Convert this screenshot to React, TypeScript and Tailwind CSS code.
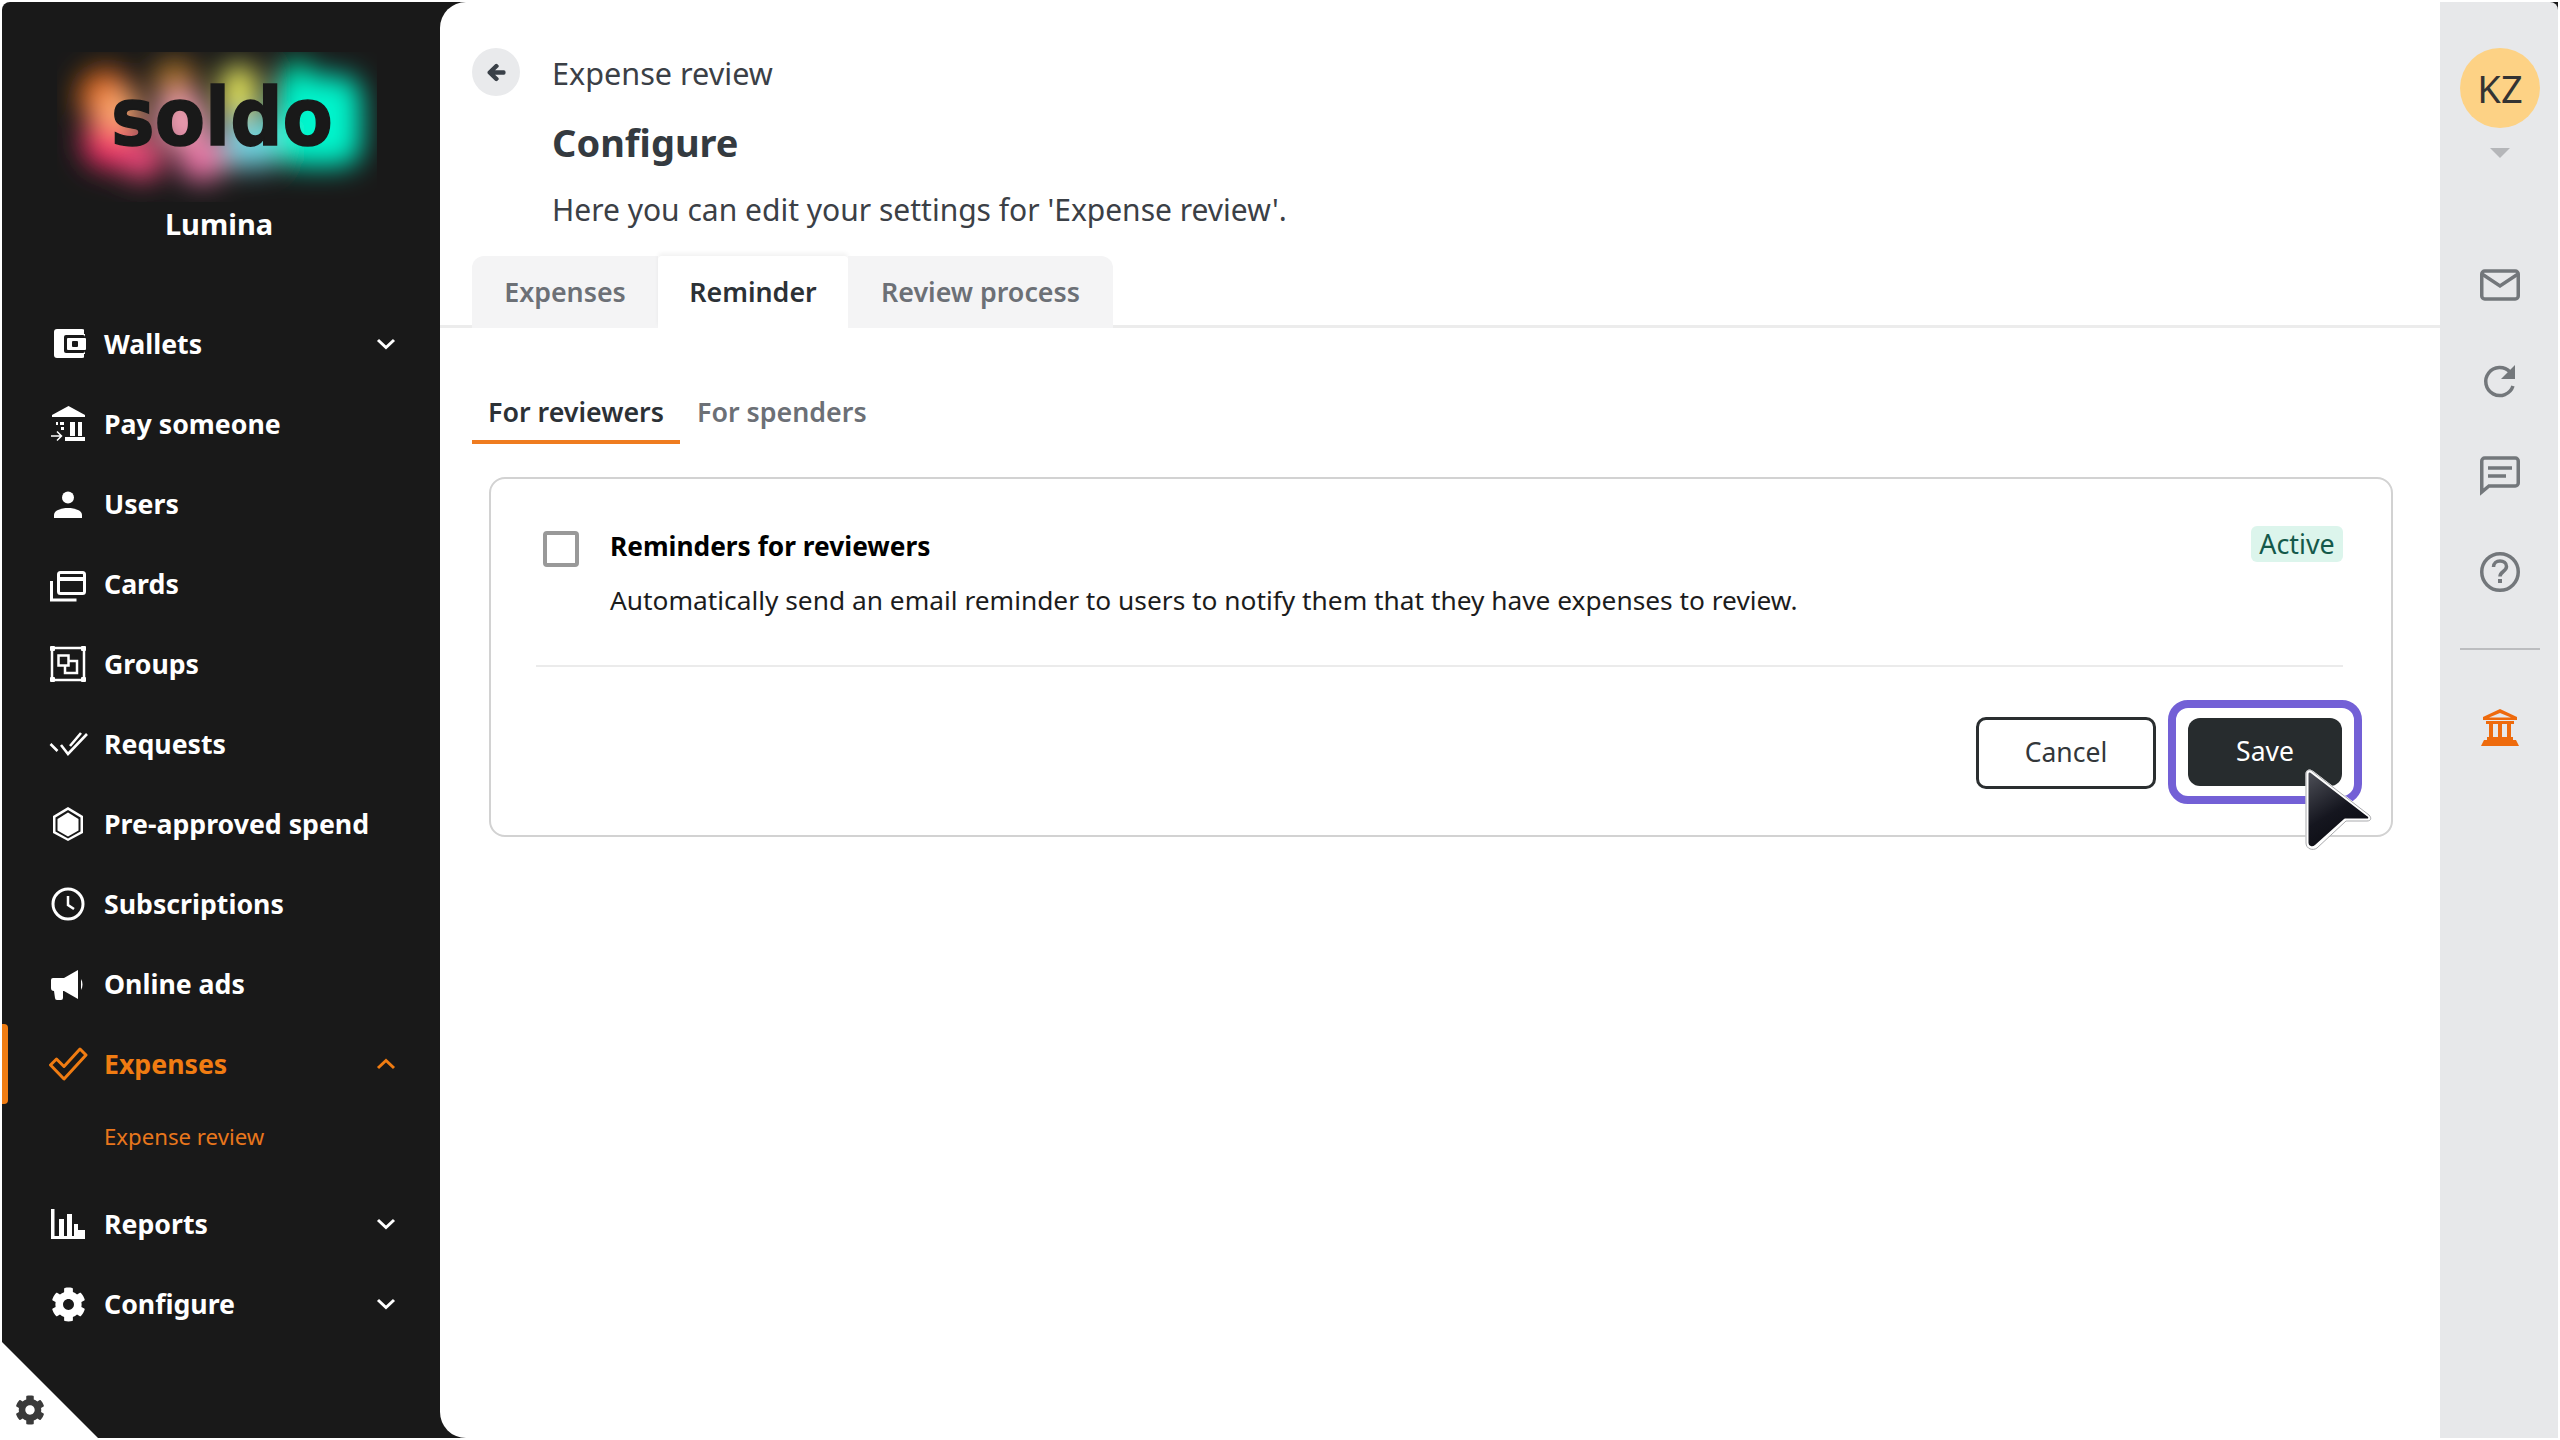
import React from "react";
import { FaCog, FaArrowLeft } from "react-icons/fa";

const I = ({ children }: { children: React.ReactNode }) => (
  <svg viewBox="0 0 40 40" className="w-[40px] h-[40px] shrink-0" fill="none">{children}</svg>
);
const D = "#191919";
const icons: Record<string, React.ReactNode> = {
  wallet: (
    <I>
      <rect x="6" y="5" width="31" height="29" rx="3" fill="#fff" />
      <rect x="16" y="11" width="21" height="18" rx="2" fill={D} />
      <rect x="19" y="14" width="19" height="12" rx="1" fill="#fff" />
      <rect x="24" y="17" width="6" height="6" rx="1" fill={D} />
      <rect x="36" y="5" width="2" height="5" fill={D} />
      <rect x="36" y="30" width="2" height="5" fill={D} />
    </I>
  ),
  bank: (
    <I>
      <polygon points="20.5,2 37,11 37,13 4,13 4,11" fill="#fff" />
      <rect x="22" y="18" width="5" height="14" fill="#fff" />
      <rect x="30" y="18" width="4" height="14" fill="#fff" />
      <rect x="17" y="33" width="20" height="4" fill="#fff" />
      <rect x="12" y="18" width="4" height="3" fill="#fff" />
      <rect x="8" y="18" width="2" height="3" fill="#fff" />
      <rect x="13" y="23" width="3" height="3" fill="#fff" />
      <path d="M3 32h10M9 27.5l4.5 4.5L9 36.5" stroke="#fff" strokeWidth="1.5" />
    </I>
  ),
  user: (
    <I>
      <circle cx="20" cy="13.5" r="6" fill="#fff" />
      <path d="M6 34v-3c0-5 8-7 14-7s14 2 14 7v3z" fill="#fff" />
    </I>
  ),
  cards: (
    <I>
      <rect x="10.5" y="8.5" width="26" height="21" rx="2" stroke="#fff" strokeWidth="3" />
      <rect x="10" y="13" width="27" height="4" fill="#fff" />
      <path d="M3.5 17v19h25" stroke="#fff" strokeWidth="3" />
    </I>
  ),
  groups: (
    <I>
      <rect x="4" y="4" width="32" height="32" stroke="#fff" strokeWidth="2.5" />
      <rect x="2" y="2" width="5" height="5" rx="1" fill="#fff" />
      <rect x="33" y="2" width="5" height="5" rx="1" fill="#fff" />
      <rect x="2" y="33" width="5" height="5" rx="1" fill="#fff" />
      <rect x="33" y="33" width="5" height="5" rx="1" fill="#fff" />
      <rect x="10.5" y="11.5" width="10" height="10" stroke="#fff" strokeWidth="2.5" />
      <path d="M21 17h8v12H17v-7" stroke="#fff" strokeWidth="2.5" />
    </I>
  ),
  requests: (
    <I>
      <path d="M2.5 20l7 7M13 21l7 9 19-20M22 22l11-13" stroke="#fff" strokeWidth="2.6" />
    </I>
  ),
  hex: (
    <I>
      <polygon points="20,3 35,12 35,29 20,37 5,29 5,12" fill="#fff" />
      <polygon points="20,6 32.5,13.5 32.5,27.5 20,34.5 7.5,27.5 7.5,13.5" fill={D} />
      <polygon points="20,8.5 30.5,15 30.5,26.5 20,32.5 9.5,26.5 9.5,15" fill="#fff" />
    </I>
  ),
  clock: (
    <I>
      <circle cx="20" cy="20" r="15" stroke="#fff" strokeWidth="3" />
      <path d="M20 12v9l6 4" stroke="#fff" strokeWidth="2.5" />
    </I>
  ),
  ads: (
    <I>
      <path d="M5 14h11l14-8v29l-14-8h-1v7a2 2 0 0 1-2 2H9a2 2 0 0 1-2-2l-1-7a3 3 0 0 1-3-3v-8a2 2 0 0 1 2-2z" fill="#fff" />
      <path d="M33 15c2 3 2 8 0 11z" fill="#fff" />
    </I>
  ),
  expenses: (
    <I>
      <polygon points="2.5,21 8.5,15 16,22.5 32,5 38,11 16,35" stroke="#f07c12" strokeWidth="3" strokeLinejoin="round" />
    </I>
  ),
  reports: (
    <I>
      <path d="M3 5h3.5v27h2V35H3zM11 15h5v17h-5zM19 10h5v22h-5zM26 20h4v12h-4zM30 26h7v9H8v-3h22z" fill="#fff" />
    </I>
  ),
  cog: (
    <div className="w-[40px] h-[40px] shrink-0 flex items-center justify-center text-white">
      <FaCog size={35} />
    </div>
  ),
};

const Chevron = ({ up, color }: { up?: boolean; color: string }) => (
  <svg viewBox="0 0 20 12" className="w-[20px] h-[12px]" fill="none">
    <path d={up ? "M2 10l8-7.5 8 7.5" : "M2 2l8 7.5 8-7.5"} stroke={color} strokeWidth="3" />
  </svg>
);

const Row = ({ icon, label, chev, active }: { icon: string; label: string; chev?: boolean; active?: boolean }) => (
  <div className="relative flex h-[80px] items-center pl-[46px] pr-[44px]">
    {active && <div className="absolute left-0 top-0 h-[80px] w-[6px] rounded-r-[4px] bg-[#f07c12]" />}
    {icons[icon]}
    <span className={`ml-[16px] flex-1 text-[26.7px] font-bold leading-none ${active ? "text-[#f07c12]" : "text-white"}`}>{label}</span>
    {chev && <Chevron up={active} color={active ? "#f07c12" : "#fff"} />}
  </div>
);

function Logo() {
  return (
    <svg viewBox="0 0 320 150" className="h-[150px] w-[320px]">
      <defs>
        <filter id="blur" x="-60%" y="-60%" width="220%" height="220%">
          <feGaussianBlur stdDeviation="14" />
        </filter>
      </defs>
      <g filter="url(#blur)">
        <circle cx="48" cy="44" r="27" fill="#e86c18" />
        <circle cx="52" cy="90" r="27" fill="#f8306a" />
        <circle cx="62" cy="60" r="22" fill="#ffae74" />
        <circle cx="118" cy="30" r="22" fill="#b87a2c" />
        <circle cx="85" cy="106" r="22" fill="#ee4a7c" />
        <circle cx="145" cy="106" r="24" fill="#ee74a8" />
        <circle cx="125" cy="68" r="26" fill="#fba6bc" />
        <rect x="164" y="14" width="36" height="52" rx="12" fill="#eef062" />
        <rect x="166" y="66" width="54" height="50" rx="14" fill="#72d4e2" />
        <rect x="224" y="8" width="30" height="50" rx="10" fill="#0ad092" />
        <rect x="218" y="24" width="86" height="90" rx="20" fill="#00f5cc" />
      </g>
      <text x="165" y="93" textAnchor="middle" textLength="222" lengthAdjust="spacingAndGlyphs" fill="#191919" stroke="#191919" strokeWidth="1.5" fontFamily="'DejaVu Sans', sans-serif" fontWeight="700" fontSize="80">soldo</text>
    </svg>
  );
}

const Mail = () => (
  <svg viewBox="0 0 40 40" className="w-[40px] h-[40px]" fill="none" stroke="#73777b" strokeWidth="3.5">
    <rect x="1.75" y="6" width="36.5" height="28" rx="3" />
    <path d="M2 9l18 12 18-12" />
  </svg>
);
const Refresh = () => (
  <svg viewBox="0 0 40 40" className="w-[40px] h-[40px]" fill="none">
    <path d="M33 25a14 14 0 1 1-3-14" stroke="#73777b" strokeWidth="3.5" />
    <polygon points="35,4 35,18 21,18" fill="#73777b" />
  </svg>
);
const Chat = () => (
  <svg viewBox="0 0 40 40" className="w-[40px] h-[40px]" fill="none" stroke="#73777b" strokeWidth="3.5">
    <path d="M1.75 36V5a3 3 0 0 1 3-3h30.5a3 3 0 0 1 3 3v22a3 3 0 0 1-3 3H9z" />
    <path d="M8 12h24M8 20h18" />
  </svg>
);
const Help = () => (
  <svg viewBox="0 0 40 40" className="w-[40px] h-[40px]" fill="none" stroke="#73777b" strokeWidth="3.5">
    <circle cx="20" cy="20" r="18.25" />
    <path d="M13.5 15c0-4 3-6 6.5-6s6.5 2 6.5 5.5c0 5-6.5 5-6.5 10" />
    <rect x="18" y="27" width="4" height="4" fill="#73777b" stroke="none" />
  </svg>
);
const BankO = () => (
  <svg viewBox="0 0 40 40" className="w-[40px] h-[40px]" fill="none">
    <path d="M20 2L37 10v3H3v-3z M20 6L9 10.5h22z" fill="#ee6a0c" fillRule="evenodd" />
    <path d="M6 14h28v3H6zM7 30h26v3H7zM9 17h4v13H9zM18 17h4v13h-4zM27 17h4v13h-4z" fill="#ee6a0c" />
    <path d="M4 33h32l3 6H1z" fill="#ee6a0c" />
  </svg>
);

export default function App() {
  return (
    <div className="flex h-[1440px] w-[2560px] overflow-hidden bg-white p-[2px]" style={{ fontFamily: '"Noto Sans", sans-serif' }}>
      <div className="flex h-full flex-1 overflow-hidden rounded-tl-[8px] bg-[#191919]">
        <aside className="relative flex w-[438px] shrink-0 flex-col">
          <div className="flex justify-center pt-[50px] pr-[8px]"><Logo /></div>
          <div className="mt-[2px] pr-[4px] text-center text-[29px] font-bold leading-[40px] text-white">Lumina</div>
          <nav className="mt-[60px] flex flex-col">
            <Row icon="wallet" label="Wallets" chev />
            <Row icon="bank" label="Pay someone" />
            <Row icon="user" label="Users" />
            <Row icon="cards" label="Cards" />
            <Row icon="groups" label="Groups" />
            <Row icon="requests" label="Requests" />
            <Row icon="hex" label="Pre-approved spend" />
            <Row icon="clock" label="Subscriptions" />
            <Row icon="ads" label="Online ads" />
            <Row icon="expenses" label="Expenses" chev active />
            <div className="flex h-[80px] items-center pb-[13px] pl-[102px] text-[22.2px] leading-none text-[#e8761c]">Expense review</div>
            <Row icon="reports" label="Reports" chev />
            <Row icon="cog" label="Configure" chev />
          </nav>
          <div className="absolute bottom-0 left-0 h-[96px] w-[96px] bg-white [clip-path:polygon(0_0,100%_100%,0_100%)]" />
          <div className="absolute bottom-[13px] left-[13px] text-[#3a3a3a]"><FaCog size={30} /></div>
        </aside>

        <main className="relative flex-1 rounded-l-[26px] bg-white">
          <header className="relative h-[326px] border-b-[3px] border-[#ececec]">
            <div className="flex items-start pl-[32px] pt-[46px]">
              <div className="flex h-[48px] w-[48px] items-center justify-center rounded-full bg-[#e9eaec] text-[#3a4048]"><FaArrowLeft size={19} stroke="currentColor" strokeWidth={40} /></div>
              <div className="ml-[32px] text-[#3b4046]">
                <div className="text-[30.6px] leading-[50px]">Expense review</div>
                <div className="mt-[19px] text-[38px] font-bold leading-[50px] text-[#343a40]">Configure</div>
                <div className="mt-[18px] text-[30px] leading-[50px]">Here you can edit your settings for 'Expense review'.</div>
              </div>
            </div>
            <div className="absolute bottom-[-3px] left-[32px] flex h-[72px] text-[26.8px] font-semibold leading-none">
              <div className="flex w-[186px] items-center justify-center rounded-tl-[12px] bg-[#f4f4f5] text-[#6c7076]">Expenses</div>
              <div className="flex w-[190px] items-center justify-center rounded-t-[4px] bg-white text-[#2c3136] shadow-[0_-3px_4px_rgba(0,0,0,0.05)]">Reminder</div>
              <div className="flex w-[265px] items-center justify-center rounded-tr-[12px] bg-[#f4f4f5] text-[#6c7076]">Review process</div>
            </div>
          </header>

          <div className="pl-[32px] pr-[47px]">
            <div className="mt-[32px] flex h-[84px] text-[26.8px] font-semibold leading-none">
              <div className="flex h-[84px] w-[208px] items-center justify-center border-b-[4px] border-[#ef7c20] pt-[24px] text-[#2c3136]">For reviewers</div>
              <div className="ml-[17px] flex h-[80px] items-center pt-[24px] text-[#6c7076]">For spenders</div>
            </div>
            <section className="ml-[17px] mt-[33px] h-[360px] rounded-[16px] border-2 border-[#d2d2d2] pl-[45px] pr-[48px]">
              <div className="flex h-[188px] border-b-2 border-[#ebebeb] pt-[45px]">
                <div className="mt-[7px] ml-[7px] h-[36px] w-[36px] rounded-[4px] border-[4px] border-[#999]" />
                <div className="ml-[31px] flex-1 text-black">
                  <div className="text-[26.3px] font-bold leading-[44px]">Reminders for reviewers</div>
                  <div className="mt-[10px] text-[26.3px] leading-[44px] text-[#1c1c1c]">Automatically send an email reminder to users to notify them that they have expenses to review.</div>
                </div>
                <div className="mt-[2px] flex h-[36px] w-[92px] items-center justify-center rounded-[6px] bg-[#dcf5ec] text-[26.8px] leading-none text-[#14594a]">Active</div>
              </div>
              <div className="mt-[33px] flex items-center justify-end">
                <button className="mr-[12px] mt-[2px] h-[72px] w-[180px] rounded-[10px] border-[3px] border-[#2a2e30] text-[26.5px] text-[#33373a]">Cancel</button>
                <div className="relative mr-[-19px] rounded-[20px] border-[8px] border-[#7360d6] px-[12px] py-[10px]">
                  <button className="block h-[68px] w-[154px] rounded-[12px] bg-[#272c2e] text-[26.5px] text-white">Save</button>
                  <svg viewBox="0 0 72 84" className="absolute left-[127px] top-[60px] h-[84px] w-[72px]">
                    <defs>
                      <linearGradient id="cur" x1="0" y1="0" x2="0.5" y2="1">
                        <stop offset="0" stopColor="#50525a" />
                        <stop offset="0.6" stopColor="#15161f" />
                        <stop offset="1" stopColor="#0b0c12" />
                      </linearGradient>
                    </defs>
                    <path d="M4 6c0-3 3-4 5-2l56 43c3 2 2 5-1 5H42L13 78c-3 3-9 2-9-3z" fill="url(#cur)" stroke="#fff" strokeWidth="3" strokeLinejoin="round" />
                    <path d="M3 6c0-4 4-5 6-3l57 44c3 3 2 6-2 6H43L14 80c-4 3-11 1-11-5z" fill="none" stroke="#a9aaad" strokeWidth="1" />
                  </svg>
                </div>
              </div>
            </section>
          </div>
        </main>

        <div className="flex w-[118px] shrink-0 flex-col items-center rounded-tr-[8px] bg-[#e7e8ea] pl-[2px] pt-[46px]">
          <div className="flex h-[80px] w-[80px] items-center justify-center rounded-full bg-[#fdd285] text-[38px] leading-none text-[#333]">KZ</div>
          <div className="mt-[20px] h-0 w-0 border-x-[10px] border-t-[10px] border-x-transparent border-t-[#b5b6b9]" />
          <div className="mt-[107px]"><Mail /></div>
          <div className="mt-[56px]"><Refresh /></div>
          <div className="mt-[55px]"><Chat /></div>
          <div className="mt-[56px]"><Help /></div>
          <div className="mt-[56px] h-[2px] w-[80px] bg-[#bcbdc0]" />
          <div className="mt-[57px]"><BankO /></div>
        </div>
      </div>
    </div>
  );
}
